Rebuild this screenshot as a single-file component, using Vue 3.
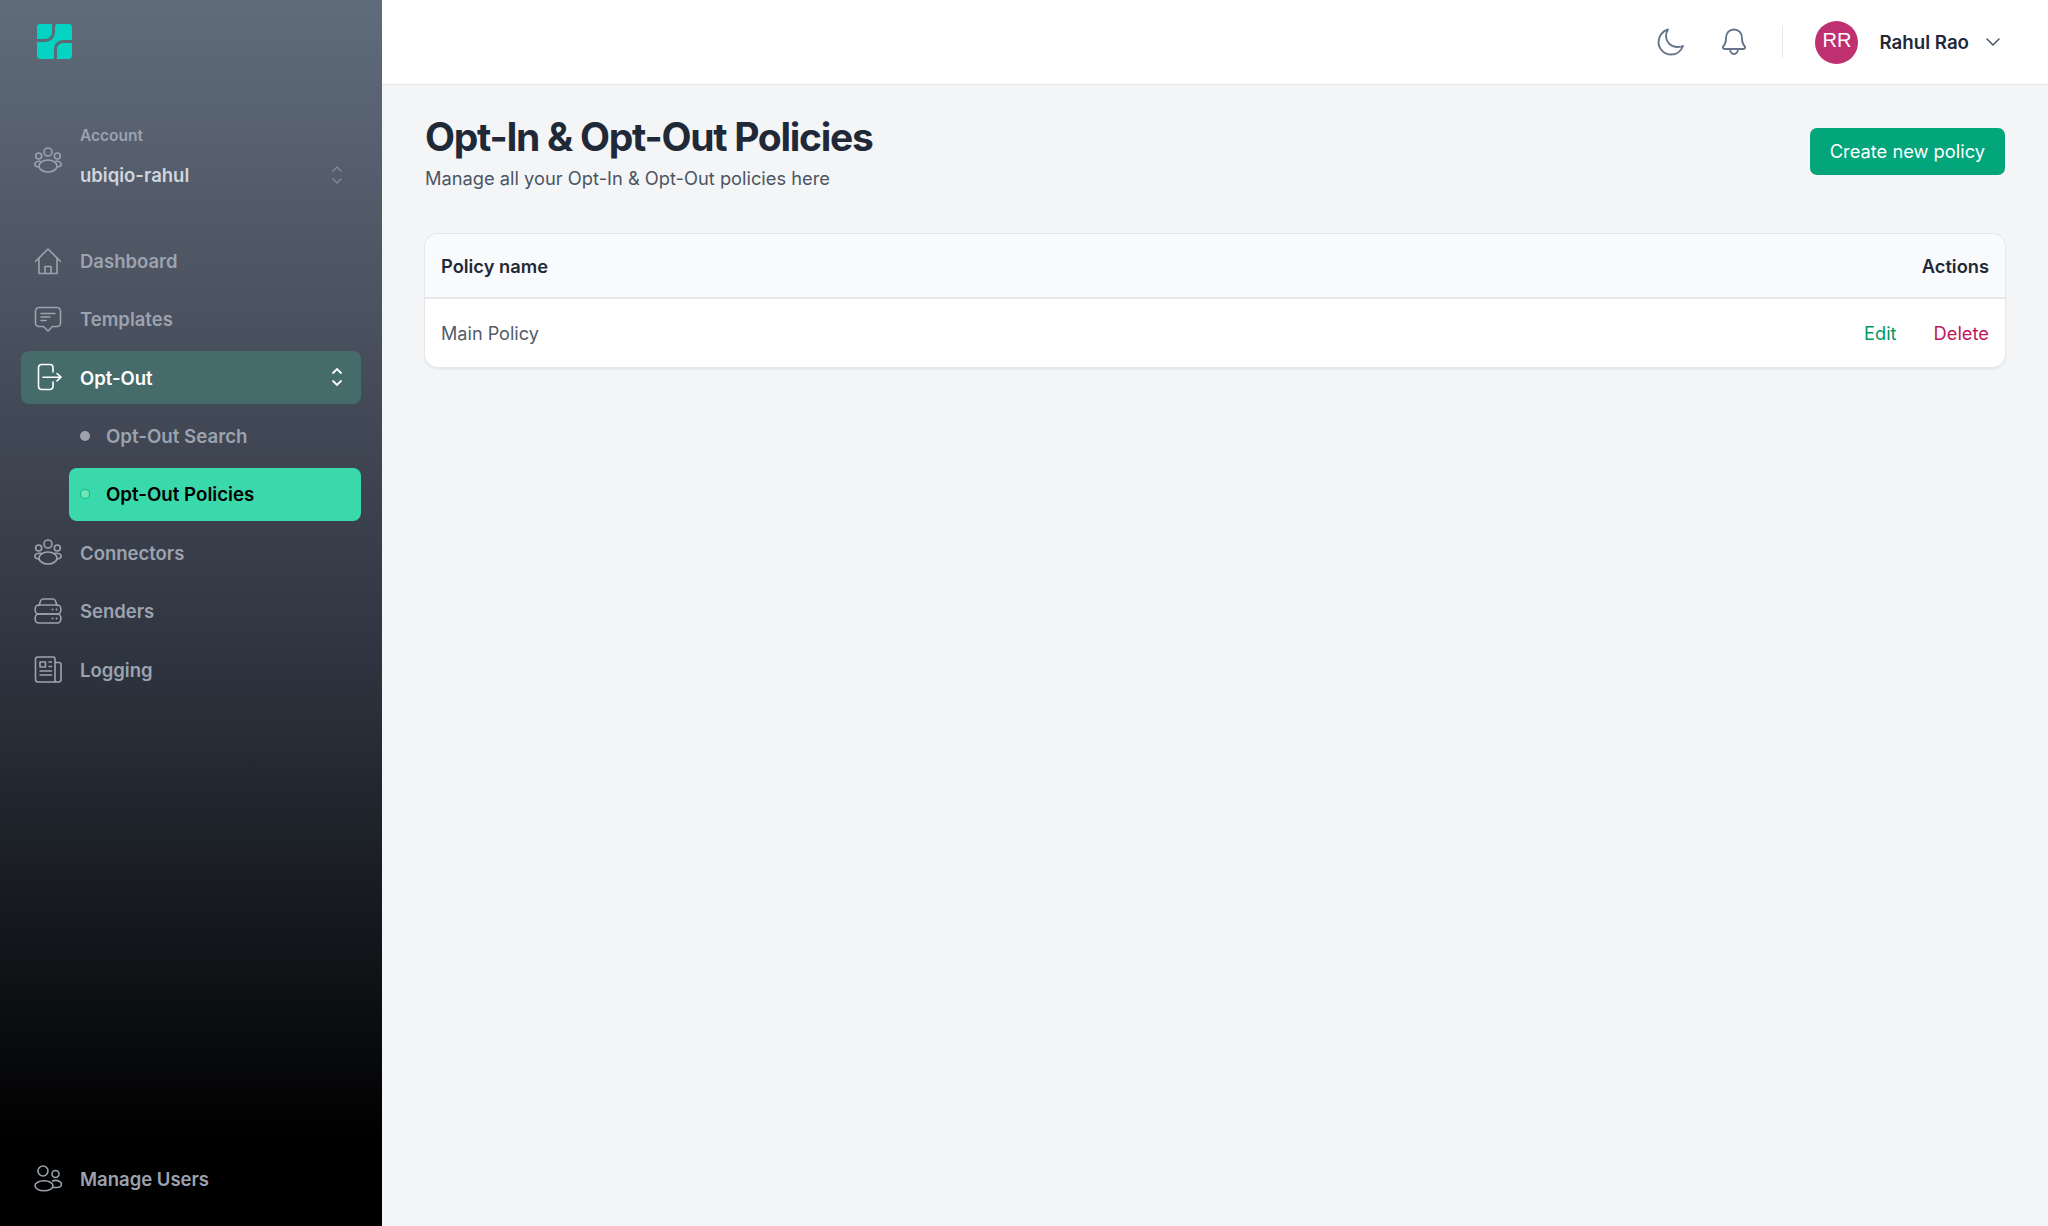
<template>
  <div class="layout">
    <aside class="sidebar">
      <div class="logo">
        <svg width="35" height="35" viewBox="0 0 36 36" fill="#04d3c3">
          <path d="M3.500 0H15.500V8.500a7 7 0 0 1-7 7H0V3.500A3.500 3.500 0 0 1 3.500 0z" />
          <path d="M21 0H32.500A3.500 3.500 0 0 1 36 3.500V16.500H26.500a9 9 0 0 0-9 9V36H3.500A3.500 3.500 0 0 1 0 32.500V18.500H8.500a10 10 0 0 0 10-10V2.500a2.500 2.500 0 0 1 2.500-2.500z" />
          <path d="M27 19.500H36V32.500A3.500 3.500 0 0 1 32.500 36H20.500V26a6.500 6.500 0 0 1 6.500-6.500z" />
        </svg>
      </div>

      <div class="account">
        <svg class="ico" viewBox="0 0 28 28" fill="none" stroke="currentColor" stroke-width="1.600">
          <circle cx="14" cy="6" r="4" />
          <circle cx="4.700" cy="10" r="3" />
          <circle cx="23.300" cy="10" r="3" />
          <ellipse cx="14" cy="20" rx="9" ry="6" />
          <path d="M6.500 15c-3.200.3-5.700 1.600-5.700 3.200 0 1.300 1.600 2.400 3.700 2.800M21.500 15c3.200.3 5.700 1.600 5.700 3.200 0 1.300-1.600 2.400-3.700 2.800" />
        </svg>
        <div class="account-text">
          <span class="account-label">Account</span>
          <span class="account-name">ubiqio-rahul</span>
        </div>
        <svg class="updown dim" viewBox="0 0 12 20" fill="none" stroke="currentColor" stroke-width="1.300">
          <path d="M1.500 6.500 6 2l4.500 4.500M1.500 13.500 6 18l4.500-4.500" />
        </svg>
      </div>

      <nav class="nav">
        <a v-for="item in items" :key="item.label" class="row" :class="item.cls">
          <span v-if="item.sub" class="dot"></span>
          <svg v-else class="ico" viewBox="0 0 28 28" fill="none" stroke="currentColor" stroke-width="1.600" stroke-linecap="round" stroke-linejoin="round">
            <g v-if="item.icon === 'home'">
              <path d="M1.500 14.500 14 2l12.500 12.500" />
              <path d="M5 11.500V26.500h18V11.500" />
              <path d="M11 26.500V19.500h6v7" />
            </g>
            <g v-else-if="item.icon === 'chat'">
              <path d="M5 2.500h18a3.500 3.500 0 0 1 3.500 3.500v12a3.500 3.500 0 0 1-3.500 3.500h-4.500L14 26l-4.500-4.500H5A3.500 3.500 0 0 1 1.500 18V6A3.500 3.500 0 0 1 5 2.500z" />
              <path d="M7 8.500h14M7 12h9M7 15.500h5" />
            </g>
            <g v-else-if="item.icon === 'out'">
              <path d="M19 9V4.500a3 3 0 0 0-3-3H7.500a3 3 0 0 0-3 3v19a3 3 0 0 0 3 3H16a3 3 0 0 0 3-3V19" />
              <path d="M9 14.200h18M23 10.500l4 3.700-4 3.700" />
            </g>
            <g v-else-if="item.icon === 'people'">
              <circle cx="14" cy="6" r="4" />
              <circle cx="4.700" cy="10" r="3" />
              <circle cx="23.300" cy="10" r="3" />
              <ellipse cx="14" cy="20" rx="9" ry="6" />
              <path d="M6.500 15c-3.200.3-5.700 1.600-5.700 3.200 0 1.300 1.600 2.400 3.700 2.800M21.500 15c3.200.3 5.700 1.600 5.700 3.200 0 1.300-1.600 2.400-3.700 2.800" />
            </g>
            <g v-else-if="item.icon === 'server'">
              <path d="M5 8.500 6.500 4a3 3 0 0 1 3-2h9a3 3 0 0 1 3 2L23 8.500" />
              <rect x="1.200" y="8" width="25.600" height="9" rx="3.500" />
              <rect x="1.200" y="17" width="25.600" height="9" rx="3.500" />
              <path d="M18.500 12.500h.1M22.500 12.500h.1M18.500 21.500h.1M22.500 21.500h.1" stroke-width="1.800" />
            </g>
            <g v-else-if="item.icon === 'news'">
              <path d="M21 7.500h4a2 2 0 0 1 2 2v15a2.500 2.500 0 0 1-2.500 2.500H23a2 2 0 0 1-2-2V4a2 2 0 0 0-2-2H3.500a2 2 0 0 0-2 2v20.500A2.500 2.500 0 0 0 4 27h19" />
              <rect x="6" y="7" width="5.500" height="5" />
              <path d="M15 7h2.500M15 11.500h2.500M6 16h11.500M6 20h11.500" />
            </g>
          </svg>
          <span class="label">{{ item.label }}</span>
          <svg v-if="item.icon === 'out'" class="updown" viewBox="0 0 12 20" fill="none" stroke="currentColor" stroke-width="1.800">
            <path d="M1.500 6.500 6 2l4.500 4.500M1.500 13.500 6 18l4.500-4.500" />
          </svg>
        </a>
      </nav>

      <a class="row manage">
        <svg class="ico" viewBox="0 0 28 28" fill="none" stroke="currentColor" stroke-width="1.600">
          <circle cx="9" cy="6" r="5" />
          <circle cx="21.500" cy="9" r="3.500" />
          <ellipse cx="10" cy="20.800" rx="9" ry="5" />
          <path d="M18 16.200c1-.5 2.200-.8 3.500-.8 3.400 0 6 1.800 6 3.800 0 1.900-2 3.300-5 3.300h-4" />
        </svg>
        <span class="label">Manage Users</span>
      </a>
    </aside>

    <div class="main">
      <header class="topbar">
        <svg class="top-ico" viewBox="0 0 28 28" fill="none" stroke="currentColor" stroke-width="1.900" stroke-linecap="round" stroke-linejoin="round">
          <path d="M11 1.500C5.500 3 1.500 8 1.500 14c0 7 5.700 12.500 12.500 12.500 5.500 0 10.200-3.500 12-8.500-2 .9-4.200 1.200-6.500 1-6.500-.5-10.500-5.500-10.500-11 0-2.300.8-4.700 2-6.500z" />
        </svg>
        <svg class="top-ico bell" viewBox="0 0 28 28" fill="none" stroke="currentColor" stroke-width="1.900" stroke-linecap="round" stroke-linejoin="round">
          <path d="M10 21c0 3 1.800 5 4 5s4-2 4-5" />
          <path d="M14 1.500c-4.700 0-8 3.700-8 8.500 0 3.500-.5 6-2.500 8-1.200 1.300-.6 3 1.200 3h18.600c1.800 0 2.400-1.700 1.200-3-2-2-2.500-4.500-2.500-8 0-4.800-3.300-8.500-8-8.500z" />
        </svg>
        <span class="sep"></span>
        <span class="avatar">RR</span>
        <span class="username">Rahul Rao</span>
        <svg class="caret" viewBox="0 0 14 8" fill="none" stroke="currentColor" stroke-width="1.500" stroke-linecap="round" stroke-linejoin="round">
          <path d="M1 1l6 6 6-6" />
        </svg>
      </header>

      <main class="content">
        <div class="head">
          <div>
            <h1>Opt-In &amp; Opt-Out Policies</h1>
            <p>Manage all your Opt-In &amp; Opt-Out policies here</p>
          </div>
          <button class="primary">Create new policy</button>
        </div>

        <div class="card">
          <div class="thead">
            <span>Policy name</span>
            <span>Actions</span>
          </div>
          <div class="tbody">
            <span>Main Policy</span>
            <span class="actions">
              <a class="edit">Edit</a>
              <a class="del">Delete</a>
            </span>
          </div>
        </div>
      </main>
    </div>
  </div>
</template>

<script setup>
const items = [
  { label: 'Dashboard', icon: 'home' },
  { label: 'Templates', icon: 'chat' },
  { label: 'Opt-Out', icon: 'out', cls: 'open' },
  { label: 'Opt-Out Search', sub: true, cls: 'sub' },
  { label: 'Opt-Out Policies', sub: true, cls: 'sub current' },
  { label: 'Connectors', icon: 'people' },
  { label: 'Senders', icon: 'server' },
  { label: 'Logging', icon: 'news' }
]
</script>

<style>
html, body { margin: 0; background: #f4f5f7; }
</style>

<style scoped>
.layout {
  display: grid;
  grid-template-columns: 382px 1fr;
  height: 1226px;
  overflow: hidden;
  font-family: Inter, "Liberation Sans", sans-serif;
  background: #f4f5f7;
}

.sidebar {
  display: flex;
  flex-direction: column;
  padding: 24px 21px 0;
  color: #9ca3af;
  background: linear-gradient(180deg, #606c7a 0%, #4b5260 25%, #2d333e 55%, #000 93%);
}

.logo {
  height: 36px;
  padding-left: 16px;
}

.account {
  display: flex;
  align-items: center;
  margin-top: 62px;
  padding: 0 13px;
  height: 76px;
}

.account-text {
  display: flex;
  flex-direction: column;
  gap: 19px;
  margin-left: 18px;
  padding-bottom: 7px;
  flex: 1;
}

.account-label {
  font-size: 15.500px;
  font-weight: 600;
  line-height: 18px;
}

.account-name {
  font-size: 18.500px;
  font-weight: 600;
  line-height: 22px;
  color: #d1d5db;
}

.ico {
  width: 28px;
  height: 28px;
  flex: none;
}

.updown {
  width: 12px;
  height: 20px;
  flex: none;
  margin-right: 5px;
}

.updown.dim {
  align-self: flex-end;
  margin-bottom: 13px;
  opacity: .65;
}

.nav {
  display: flex;
  flex-direction: column;
  gap: 5.400px;
  margin-top: 36px;
}

.row {
  display: flex;
  align-items: center;
  height: 53px;
  padding: 0 13px;
  border-radius: 8px;
  font-size: 18.500px;
  font-weight: 600;
}

.row .label {
  margin-left: 18px;
  padding-top: 1px;
  flex: 1;
}

.row.open {
  background: #456b6a;
  color: #fff;
}

.row.sub {
  margin-left: 48px;
  padding-left: 11px;
  font-size: 18.700px;
}

.dot {
  width: 10px;
  height: 10px;
  border-radius: 50%;
  background: #9ca3af;
  flex: none;
}

.row.sub .label {
  margin-left: 16px;
}

.row.current {
  background: #3ad9ab;
  color: #000;
}

.row.current .dot {
  width: 8px;
  height: 8px;
  margin: 0 1px;
  background: #6ee7b7;
  box-shadow: 0 0 0 1px #10b981;
}

.manage {
  margin-top: auto;
  margin-bottom: 21px;
}

.main {
  display: flex;
  flex-direction: column;
  min-width: 0;
}

.topbar {
  display: flex;
  align-items: center;
  justify-content: flex-end;
  height: 85px;
  padding-right: 48px;
  background: #fff;
  border-bottom: 1px solid #e5e7eb;
  box-sizing: border-box;
}

.top-ico {
  width: 28px;
  height: 28px;
  color: #64748b;
}

.bell {
  margin-left: 35px;
}

.sep {
  width: 1px;
  height: 32px;
  margin: 0 32px 0 34px;
  background: #e5e7eb;
}

.avatar {
  display: flex;
  align-items: center;
  justify-content: center;
  width: 43px;
  height: 43px;
  padding-bottom: 3px;
  box-sizing: border-box;
  border-radius: 50%;
  background: #be3070;
  color: #fff;
  font-family: "Liberation Sans", sans-serif;
  font-size: 20px;
}

.username {
  margin-left: 21px;
  font-size: 18.700px;
  font-weight: 600;
  color: #1f2937;
}

.caret {
  width: 14px;
  height: 8px;
  margin-left: 17px;
  color: #4b5563;
}

.content {
  padding: 28px 43px 0;
}

.head {
  display: flex;
  justify-content: space-between;
  align-items: flex-start;
}

h1 {
  margin: 0;
  font-size: 39px;
  line-height: 48px;
  font-weight: 700;
  letter-spacing: -1.270px;
  color: #1f2937;
}

p {
  margin: 3.500px 0 0;
  font-size: 18.300px;
  line-height: 26px;
  color: #4b5563;
}

.primary {
  height: 47.500px;
  margin-top: 14.500px;
  padding: 0 20px;
  border: 0;
  border-radius: 7px;
  background: #03a57a;
  color: #fff;
  font: 400 18.300px Inter, "Liberation Sans", sans-serif;
}

.card {
  margin-top: 43.500px;
  background: #fff;
  border-radius: 13px;
  box-shadow: 0 0 0 1px #e5e7eb, 0 2px 3px rgba(0, 0, 0, .08);
  overflow: hidden;
}

.thead,
.tbody {
  display: flex;
  justify-content: space-between;
  align-items: center;
  padding: 0 16px;
  font-size: 18.300px;
}

.thead {
  height: 63px;
  background: #f9fafb;
  border-bottom: 2px solid #e5e7eb;
  font-weight: 600;
  color: #1f2937;
}

.tbody {
  height: 67.500px;
  color: #525c6a;
}

.tbody > span:first-child {
  font-size: 18.100px;
}

.actions {
  display: flex;
  gap: 37px;
}

.edit {
  color: #059669;
}

.del {
  color: #be185d;
}
</style>
